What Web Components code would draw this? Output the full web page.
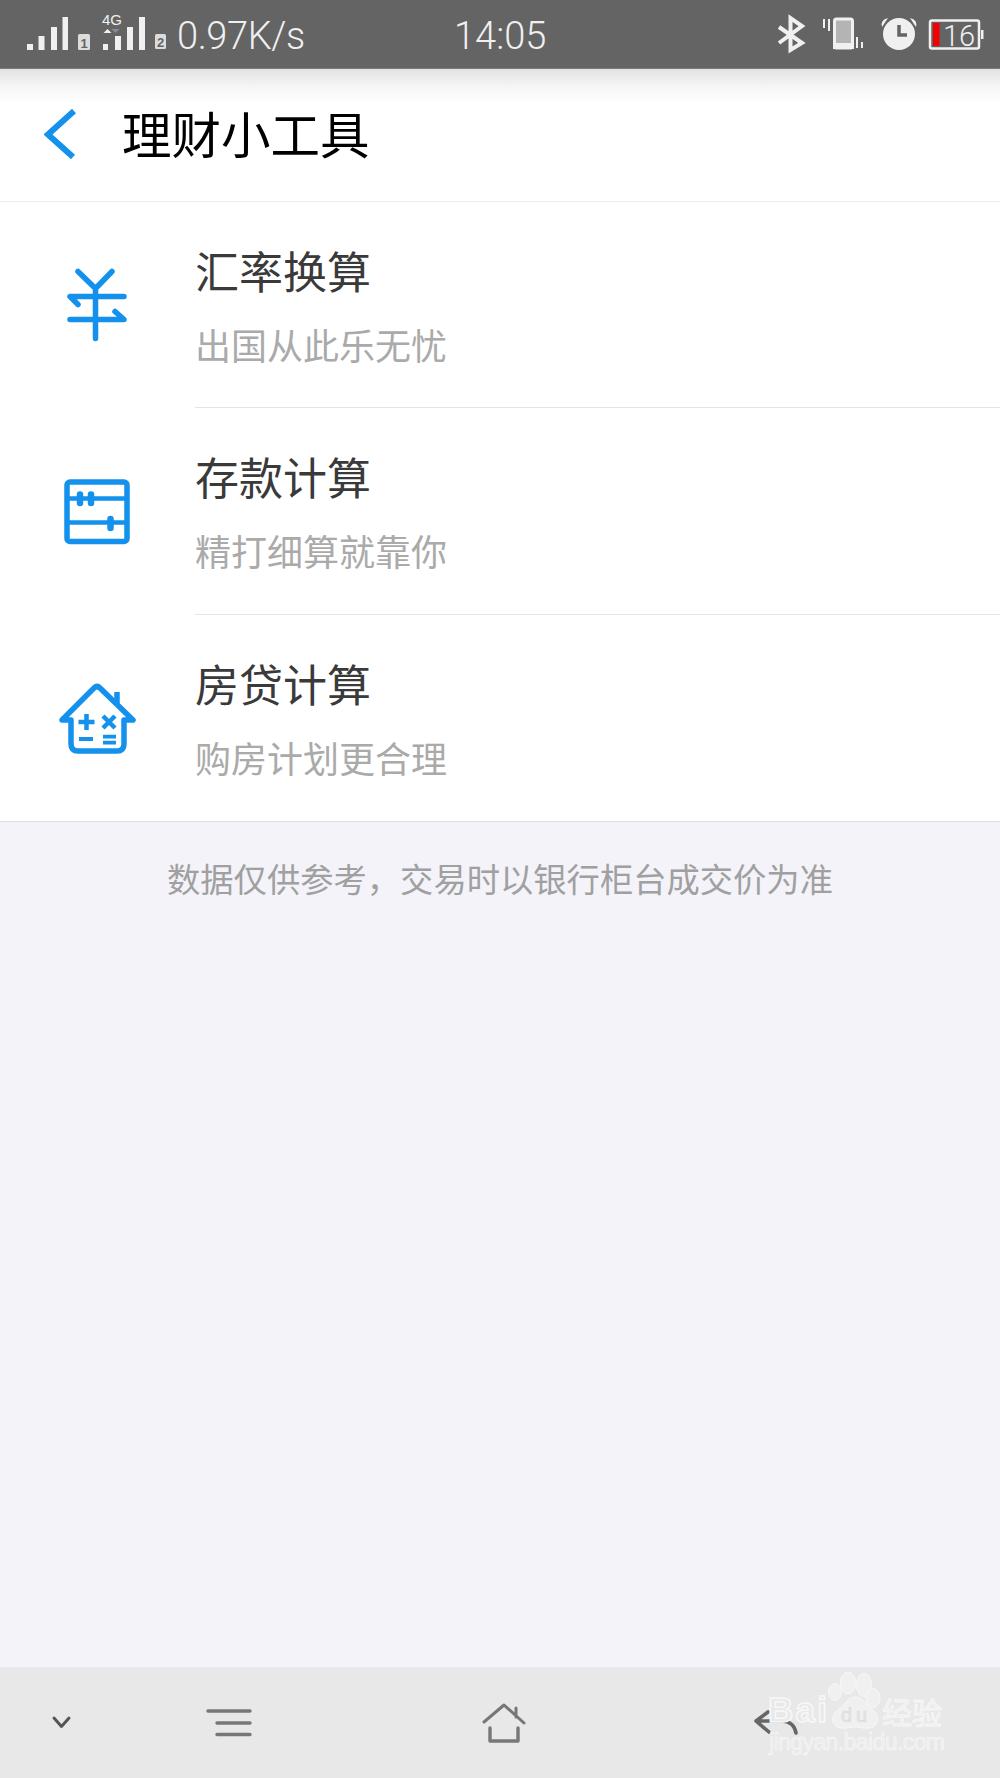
<!DOCTYPE html>
<html lang="zh-CN">
<head>
<meta charset="utf-8">
<title>理财小工具</title>
<style>
    html, body { margin: 0; height: 100%; }
    body { font-family: "Noto Sans CJK SC", "Noto Sans", sans-serif; background: #f3f3f9; }
</style>
</head>
<body>
<app-shell>
    <status-bar></status-bar>
    <app-header>理财小工具</app-header>
    <tool-list>
        <tool-item>
            <svg slot="icon" width="130" height="130" viewBox="0 -1.5 130 130" fill="none" stroke="#1391ec" stroke-width="5.5" stroke-linecap="round" stroke-linejoin="round">
                <path d="M48 30 65.5 47 82 30M65.5 47V97M48 63 40 55H94M40 78H94L85 70"/>
            </svg>
            <span slot="title">汇率换算</span>
            <span slot="sub">出国从此乐无忧</span>
        </tool-item>
        <tool-item>
            <svg slot="icon" width="130" height="130" viewBox="0 -4 130 130" fill="none" stroke="#1391ec" stroke-width="5.5" stroke-linejoin="round">
                <rect x="37" y="31" width="60" height="59.5" rx="3"/>
                <path d="M37 47.5H97M37 71.5H97" stroke-width="4.5"/>
                <path d="M50 43.5V52M61 43.5V52M80.5 68V77" stroke-width="6.5" stroke-linecap="round"/>
            </svg>
            <span slot="title">存款计算</span>
            <span slot="sub">精打细算就靠你</span>
        </tool-item>
        <tool-item>
            <svg slot="icon" width="130" height="130" viewBox="0 -8 130 130" fill="none" stroke="#1391ec" stroke-width="5.5" stroke-linecap="round" stroke-linejoin="round">
                <path d="M32 59 64 27Q67 24 70 27L103 59H94V83Q94 90 87 90H48Q41 90 41 83V59Z"/>
                <path d="M87 44V31" stroke-linecap="butt"/>
                <path d="M48.5 61H64.5M56.5 53V69M73 55 85 67M85 55 73 67" stroke-width="4.5" stroke-linecap="butt"/>
                <path d="M49 78H63M73 75.7H86M73 81.7H86" stroke-width="3.8" stroke-linecap="butt"/>
            </svg>
            <span slot="title">房贷计算</span>
            <span slot="sub">购房计划更合理</span>
        </tool-item>
    </tool-list>
    <foot-note>数据仅供参考，交易时以银行柜台成交价为准</foot-note>
    <nav-bar></nav-bar>
    <baidu-mark></baidu-mark>
</app-shell>

<script>
    function el(name, html) {
        customElements.define(name, class extends HTMLElement {
            constructor() {
                super();
                this.attachShadow({ mode: 'open' });
                this.shadowRoot.innerHTML = html;
            }
        });
    }

    el('app-shell', `
        <style>
            :host { display: flex; flex-direction: column; position: relative; height: 1778px; overflow: hidden; }
        </style>
        <slot></slot>
    `);

    el('status-bar', `
        <style>
            :host { display: flex; align-items: center; flex: none; height: 69px; background: #646464; color: #f0f0f0;
                    font-family: Roboto, "Liberation Sans", sans-serif; font-weight: 300; font-size: 38px; border-bottom: 1px solid #7a7a7a; box-sizing: border-box; }
            svg { display: block; flex: none; }
            .speed { margin: 4px 0 0 5px; width: 277px; line-height: 69px; letter-spacing: -.4px; white-space: nowrap; }
            .time { margin-top: 4px; line-height: 69px; white-space: nowrap; }
            .right { margin-left: auto; }
        </style>
        <svg width="172" height="69" viewBox="0 0 172 69" fill="#f0f0f0">
            <path d="M27 44h6v6h-6zM38.500 36h6v14h-6zM51 27h6v23h-6zM62.500 17h5.500v33h-5.500z"/>
            <path d="M103 44h5v6h-5zM115 36h6v14h-6zM127 27h6v23h-6zM139 17h6v33h-6z"/>
            <rect x="78" y="34" width="12" height="16" rx="1.500" fill="#dcdcdc"/>
            <text x="84" y="47.500" font-family="Liberation Sans" font-size="13" font-weight="700" text-anchor="middle" fill="#646464">1</text>
            <rect x="155" y="34" width="11" height="15" rx="1.500" fill="#dcdcdc"/>
            <text x="160.500" y="46.500" font-family="Liberation Sans" font-size="13" font-weight="700" text-anchor="middle" fill="#646464">2</text>
            <text x="112" y="25" font-family="Liberation Sans" font-size="15" text-anchor="middle">4G</text>
            <path d="M107.500 29l4 4h-8z"/>
            <path d="M111.500 29h8l-4 4z" fill="#8c8c8c"/>
        </svg>
        <span class="speed">0.97K/s</span>
        <span class="time">14:05</span>
        <svg class="right" width="240" height="69" viewBox="760 0 240 69">
            <path d="M779 27 802 43 790.500 50V18L802 26 779 43" fill="none" stroke="#f0f0f0" stroke-width="4" stroke-linejoin="miter"/>
            <path d="M823 19h2v9h-2zM828 19h2v12h-2zM856 37h2v11h-2zM861 42h2v6h-2z" fill="#f0f0f0"/>
            <rect x="834.500" y="19" width="18" height="29" rx="2" fill="#b4b4b4" stroke="#f0f0f0" stroke-width="3"/>
            <rect x="833" y="43" width="21" height="6" fill="#f0f0f0"/>
            <circle cx="899" cy="34" r="16" fill="#f0f0f0"/>
            <path d="M882 27q-2-7 6-9zM916 27q2-7-6-9z" fill="#f0f0f0"/>
            <path d="M899 25v10h8" fill="none" stroke="#646464" stroke-width="3.500"/>
            <rect x="930" y="20.500" width="49" height="28" rx="2" fill="none" stroke="#f0f0f0" stroke-width="2.500"/>
            <rect x="981" y="30" width="2.500" height="9" fill="#f0f0f0"/>
            <rect x="933" y="23" width="6.500" height="23" fill="#f40000"/>
            <text x="943" y="46" font-family="Roboto" font-weight="300" font-size="29" fill="#f0f0f0">16</text>
        </svg>
    `);

    el('app-header', `
        <style>
            :host { display: flex; align-items: center; flex: none; height: 133px; box-sizing: border-box; background: linear-gradient(#e2e2e2, #f8f8f8 20px, #fff 34px);
                    border-bottom: 1px solid #ececec; color: #000; font-size: 49.500px; padding: 0 0 6px 44px; }
            svg { display: block; flex: none; margin: 4px 44px 0 0; }
            span { white-space: nowrap; }
        </style>
        <svg width="34" height="50" viewBox="0 0 34 50" fill="none" stroke="#1391ec" stroke-width="6">
            <path d="M30 2 4 25.500 29 48"/>
        </svg>
        <span><slot></slot></span>
    `);

    el('tool-list', `
        <style>
            :host { display: block; flex: none; background: #fff; border-bottom: 1px solid #dedede; }
        </style>
        <slot></slot>
    `);

    el('tool-item', `
        <style>
            :host { display: flex; height: 207px; box-sizing: border-box; }
            :host(:first-child), :host(:last-child) { height: 206px; }
            :host(:last-child) .body { border-bottom: 0; }
            .icon { flex: none; width: 195px; display: flex; align-items: center; padding-left: 30px; box-sizing: border-box; }
            .body { flex: 1; display: flex; flex-direction: column; border-bottom: 1px solid #e4e4e4; padding-top: 35px; box-sizing: border-box; }
            .title { font-size: 44px; line-height: 66px; color: #3a3a3a; }
            .sub { font-size: 36px; line-height: 54px; margin-top: 14px; color: #aaa; }
        </style>
        <div class="icon"><slot name="icon"></slot></div>
        <div class="body">
            <div class="title"><slot name="title"></slot></div>
            <div class="sub"><slot name="sub"></slot></div>
        </div>
    `);

    el('foot-note', `
        <style>
            :host { display: block; flex: 1; text-align: center; font-size: 33.300px; line-height: 48px; padding-top: 32px; color: #a0a0a0; }
        </style>
        <slot></slot>
    `);

    el('nav-bar', `
        <style>
            :host { display: grid; grid-template-columns: 124px 209px 342px 206px; align-items: center; justify-items: center; flex: none; height: 111px; background: #e8e8e8; }
            svg { display: block; }
        </style>
        <svg width="30" height="20" viewBox="0 0 30 20" fill="none" stroke="#555" stroke-width="3" stroke-linecap="round" stroke-linejoin="round">
            <path d="M7 5 14.500 13.500 22 5"/>
        </svg>
        <svg width="46" height="32" viewBox="0 0 46 32" fill="none" stroke="#777" stroke-width="3.400" stroke-linecap="round">
            <path d="M2 4H44M11 16H44M11 27.500H44"/>
        </svg>
        <svg width="46" height="42" viewBox="0 0 46 42" fill="none" stroke="#777" stroke-width="3" stroke-linecap="round" stroke-linejoin="round">
            <path d="M3 20 23 3 43 21M35 6V15"/>
            <path d="M9 26V39H37V26" stroke-width="3.400"/>
        </svg>
        <svg width="50" height="30" viewBox="0 0 50 30" fill="none" stroke="#666" stroke-width="3.600" stroke-linecap="round" stroke-linejoin="round">
            <path d="M15 4 3 13 16 24M3 13H30Q41 14 43 25"/>
        </svg>
    `);

    el('baidu-mark', `
        <style>
            :host { display: block; position: absolute; left: 760px; top: 1670px; }
            svg { display: block; }
            text { font-family: "Liberation Sans", sans-serif; fill: #eeeeee; stroke: #f8f8f8; stroke-width: 1; }
            .cjk { font-family: "Noto Sans CJK SC", sans-serif; }
        </style>
        <svg width="195" height="90" viewBox="760 1670 195 90">
            <g fill="#f0f0f0" stroke="#f8f8f8">
                <ellipse cx="835" cy="1692" rx="6.500" ry="8.500"/>
                <ellipse cx="848" cy="1683" rx="7.500" ry="11"/>
                <ellipse cx="864" cy="1685" rx="7.500" ry="11.500"/>
                <ellipse cx="873" cy="1698" rx="7" ry="9.500"/>
                <path d="M855 1697c-8 0-10 9-17 13-8 5-7 17 3 18 6 1 9-1 14-1s9 2 15 1c9-2 10-12 3-18-7-5-9-13-18-13z"/>
            </g>
            <text x="768" y="1722" font-size="35" font-weight="700" textLength="59" style="fill:#e9e9e9;stroke-width:1.500">Bai</text>
            <text x="841" y="1722" font-size="20" textLength="26" style="fill:#e6e6e6;stroke:#d8d8d8;stroke-width:.5">du</text>
            <text class="cjk" x="882" y="1724" font-size="30" style="stroke-width:.8">经验</text>
            <text x="769" y="1750" font-size="23" textLength="176" style="stroke-width:.5">jingyan.baidu.com</text>
        </svg>
    `);
</script>
</body>
</html>
